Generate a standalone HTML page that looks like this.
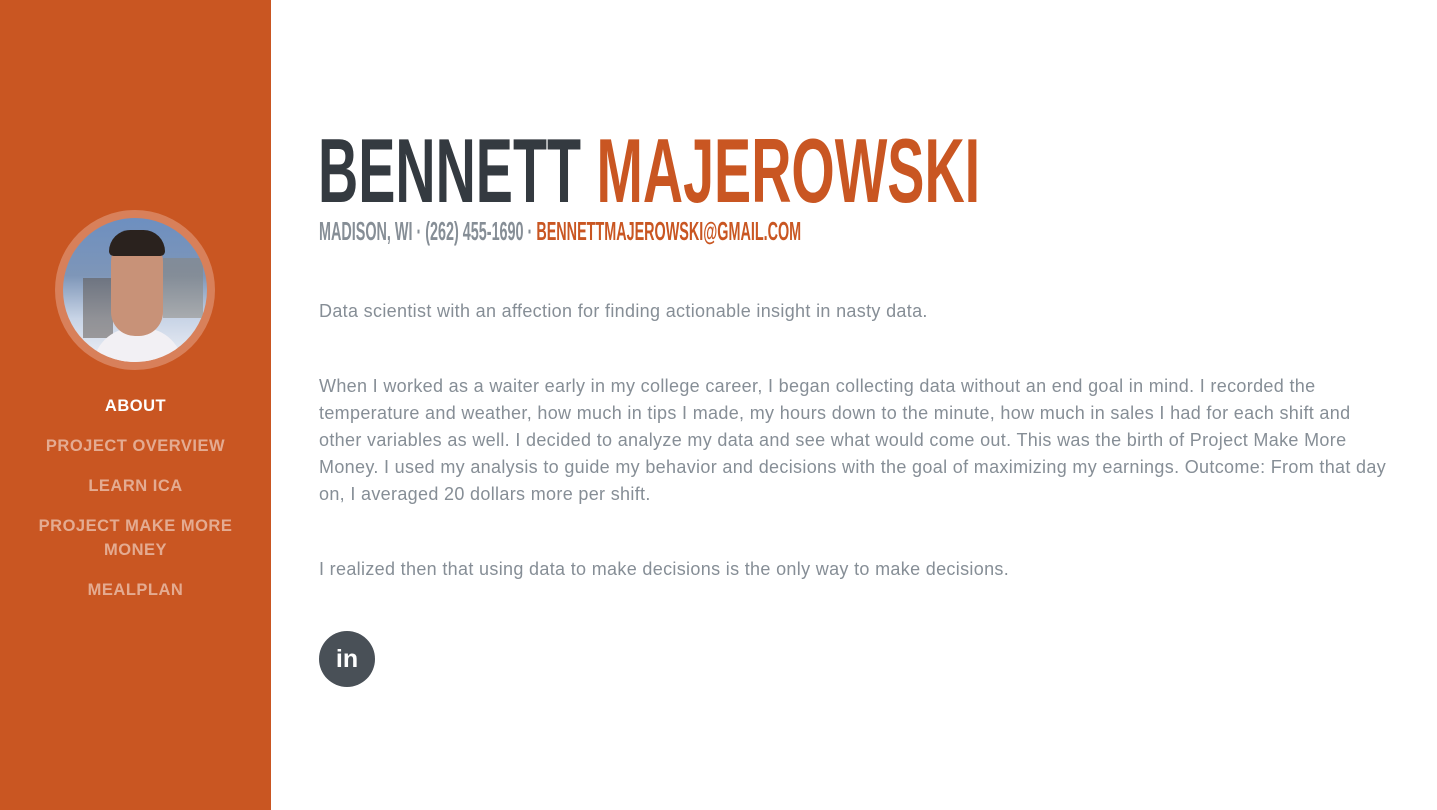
<!DOCTYPE html>
<html><head><meta charset="utf-8"><style>
*{margin:0;padding:0;box-sizing:border-box}
body{width:1437px;height:810px;overflow:hidden;background:#fff;font-family:"Liberation Sans",sans-serif;position:relative}
#side{position:absolute;left:0;top:0;width:271px;height:810px;background:#c95622}
.photo{position:absolute;left:55px;top:210px;width:160px;height:160px;border-radius:50%;background:#d8805a;padding:8px}
.photo .in{width:144px;height:144px;border-radius:50%;overflow:hidden;background:linear-gradient(180deg,#6d8fc0 0%,#7e96b8 40%,#c8d4e6 70%,#eef0f6 100%);position:relative}
.nav{position:absolute;left:0;width:271px;text-align:center;font-weight:bold;font-size:16.5px;letter-spacing:.5px;color:rgba(255,255,255,.5);line-height:24px}
.nav.a{color:#fff}
.h{position:absolute;white-space:nowrap;transform-origin:left top;font-weight:bold}
p{position:absolute;left:319px;color:#868e96;font-size:18px;letter-spacing:.33px;line-height:27px;white-space:nowrap}
</style></head><body>
<div id="side">
 <div class="photo"><div class="in">
  <div style="position:absolute;left:20px;top:60px;width:30px;height:60px;background:#5a5048;opacity:.5"></div>
  <div style="position:absolute;left:100px;top:40px;width:40px;height:60px;background:#8a8478;opacity:.5"></div>
  <div style="position:absolute;left:30px;top:110px;width:90px;height:50px;border-radius:40px 40px 0 0;background:#f2f0f4"></div>
  <div style="position:absolute;left:48px;top:18px;width:52px;height:100px;border-radius:26px 26px 24px 24px;background:#c89278"></div>
  <div style="position:absolute;left:46px;top:12px;width:56px;height:26px;border-radius:28px 28px 6px 6px;background:#2a221e"></div>
 </div></div>
 <div class="nav a" style="top:394px">ABOUT</div>
 <div class="nav" style="top:434px">PROJECT OVERVIEW</div>
 <div class="nav" style="top:474px">LEARN ICA</div>
 <div class="nav" style="top:514px">PROJECT MAKE MORE<br>MONEY</div>
 <div class="nav" style="top:578px">MEALPLAN</div>
</div>
<div class="h" style="left:318px;top:122px;font-size:91px;line-height:100px;transform:scaleX(0.612);color:#343a40">BENNETT <span style="color:#c95622">MAJEROWSKI</span></div>
<div class="h" style="left:319px;top:216px;font-size:26px;line-height:30px;transform:scaleX(0.553);color:#868e96">MADISON, WI · (262) 455-1690 · <span style="color:#c95622">BENNETTMAJEROWSKI@GMAIL.COM</span></div>
<p style="top:298px">Data scientist with an affection for finding actionable insight in nasty data.</p>
<p style="top:373px">When I worked as a waiter early in my college career, I began collecting data without an end goal in mind. I recorded the<br>temperature and weather, how much in tips I made, my hours down to the minute, how much in sales I had for each shift and<br>other variables as well. I decided to analyze my data and see what would come out. This was the birth of Project Make More<br>Money. I used my analysis to guide my behavior and decisions with the goal of maximizing my earnings. Outcome: From that day<br>on, I averaged 20 dollars more per shift.</p>
<p style="top:556px">I realized then that using data to make decisions is the only way to make decisions.</p>
<div style="position:absolute;left:319px;top:631px;width:56px;height:56px;border-radius:50%;background:#495057;color:#fff;font-weight:bold;font-size:25px;line-height:56px;text-align:center">in</div>
</body></html>
